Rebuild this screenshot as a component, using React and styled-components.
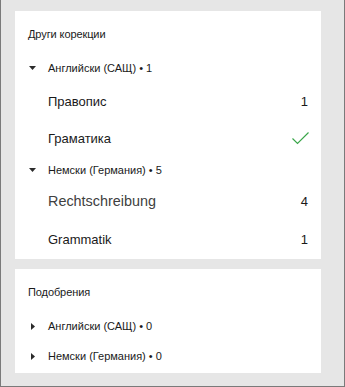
import React from 'react';
import styled, { createGlobalStyle } from 'styled-components';

const GlobalStyle = createGlobalStyle`
  * { box-sizing: border-box; }
  body {
    margin: 0;
    font-family: "Liberation Sans", Arial, sans-serif;
    color: #1a1a1a;
  }
`;

const Frame = styled.div`
  width: 345px;
  height: 387px;
  background: #e6e6e6;
  border: 1px solid #7a7a7a;
  border-top: none;
  padding: 11px 23px 0 14px;
  display: flex;
  flex-direction: column;
  gap: 10px;
`;

const Card = styled.section`
  background: #fff;
  height: ${(p) => p.$height}px;
  padding: 6px 13px 0 13px;
  display: flex;
  flex-direction: column;
`;

const Title = styled.div`
  height: 34px;
  display: flex;
  align-items: center;
  font-size: 11px;
  letter-spacing: -0.1px;
`;

const LangHeader = styled.div`
  height: ${(p) => p.$h}px;
  display: flex;
  align-items: center;
  font-size: 11px;
`;

const Caret = styled.span`
  width: 20px;
  display: flex;
  align-items: center;
  padding-left: ${(p) => (p.$open ? 1 : 3)}px;

  svg {
    fill: #2b2b2b;
  }
`;

const Row = styled.div`
  height: ${(p) => p.$h}px;
  display: flex;
  align-items: center;
  justify-content: space-between;
  padding-left: 20px;
  font-size: ${(p) => (p.$big ? 14.4 : 13)}px;
  color: ${(p) => (p.$big ? '#404040' : '#1a1a1a')};
`;

const Count = styled.span`
  font-size: 13px;
  color: #1a1a1a;
`;

const CaretIcon = ({ open }) => (
  <Caret $open={open}>
    {open ? (
      <svg width="7" height="4" viewBox="0 0 7 4">
        <polygon points="0,0 7,0 3.5,4" />
      </svg>
    ) : (
      <svg width="4" height="7" viewBox="0 0 4 7">
        <polygon points="0,0 4,3.5 0,7" />
      </svg>
    )}
  </Caret>
);

const Check = () => (
  <svg width="17" height="13" viewBox="0 0 17 13" style={{ marginRight: -1 }}>
    <polyline
      points="0.5,6.5 5.5,11.5 16.5,0.5"
      fill="none"
      stroke="#3aa64a"
      strokeWidth="1.2"
    />
  </svg>
);

const App = () => {
  return (
    <>
      <GlobalStyle />
      <Frame>
        <Card $height={248}>
          <Title>Други корекции</Title>
          <LangHeader $h={34}>
            <CaretIcon open />
            Английски (САЩ) • 1
          </LangHeader>
          <Row $h={32}>
            Правопис
            <Count>1</Count>
          </Row>
          <Row $h={42}>
            Граматика
            <Check />
          </Row>
          <LangHeader $h={22}>
            <CaretIcon open />
            Немски (Германия) • 5
          </LangHeader>
          <Row $h={40} $big>
            Rechtschreibung
            <Count>4</Count>
          </Row>
          <Row $h={36}>
            Grammatik
            <Count>1</Count>
          </Row>
        </Card>
        <Card $height={104}>
          <Title>Подобрения</Title>
          <LangHeader $h={34}>
            <CaretIcon />
            Английски (САЩ) • 0
          </LangHeader>
          <LangHeader $h={26}>
            <CaretIcon />
            Немски (Германия) • 0
          </LangHeader>
        </Card>
      </Frame>
    </>
  );
};

export default App;
